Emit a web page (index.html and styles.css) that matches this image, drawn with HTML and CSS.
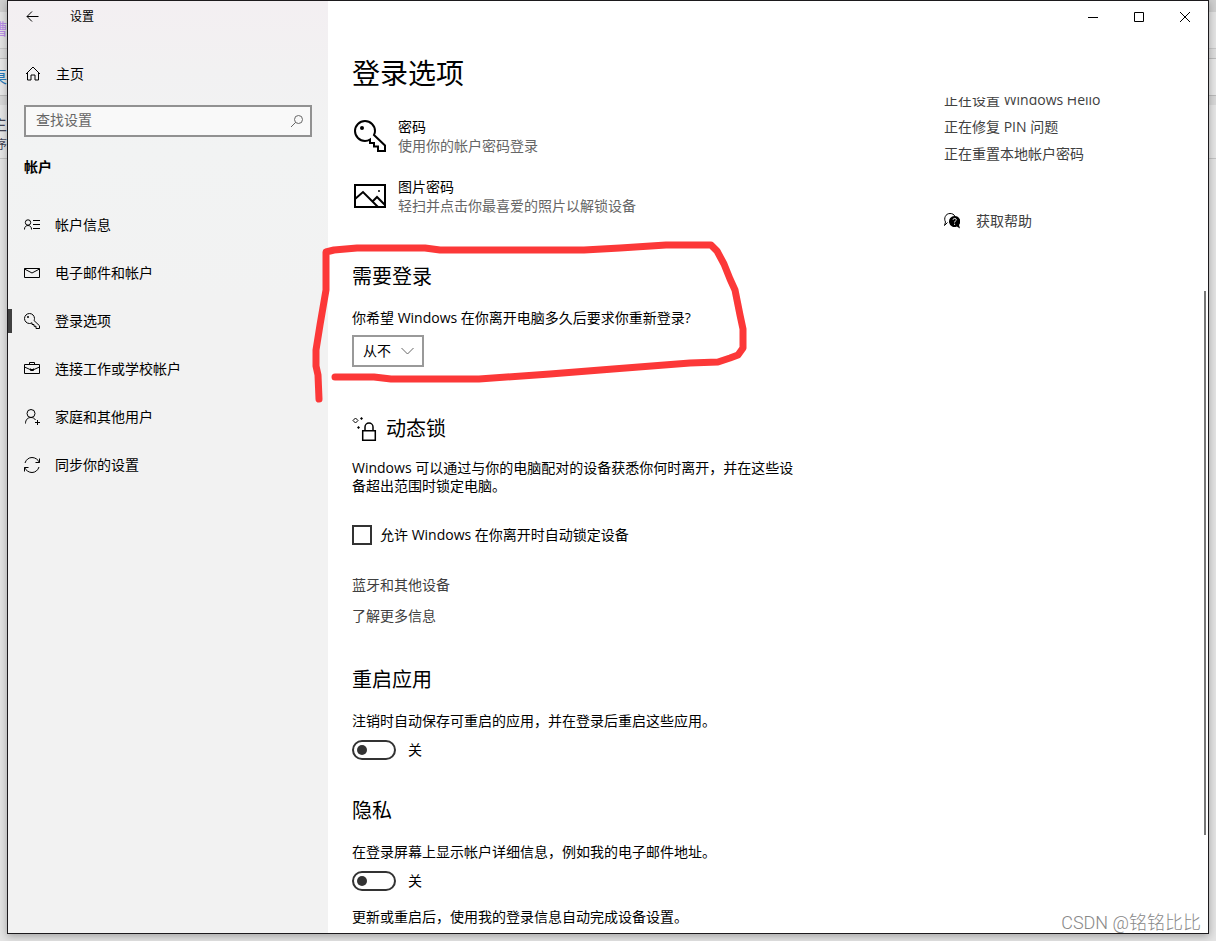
FILE: index.html
```html
<!DOCTYPE html>
<html lang="zh-CN">
<head>
<meta charset="utf-8">
<meta name="viewport" content="width=device-width, initial-scale=1">
<title>设置</title>
<link rel="stylesheet" href="styles.css">
</head>
<body>
<div class="backdrop" aria-hidden="true">
  <span class="behind behind-purple">槽</span>
  <span class="behind behind-blue">桌</span>
  <span class="behind behind-dark">主</span>
  <span class="behind behind-word">序</span>
</div>
<div class="window">
  <aside class="sidebar">
    <header class="titlebar">
      <button class="back" type="button" aria-label="返回">
        <svg width="14" height="12" viewBox="0 0 14 12"><path d="M13.500 5.500H2M7 .5l-5 5 5 5"/></svg>
      </button>
      <span class="app-name">设置</span>
    </header>
    <a class="home" href="#">
      <svg width="16" height="16" viewBox="0 0 16 16"><path d="M1 8L8 1l7 7M2.500 6.500v7.500h3.500V9h4v5h3.500V6.500"/></svg>
      <span>主页</span>
    </a>
    <form class="search">
      <input type="text" placeholder="查找设置" aria-label="查找设置">
      <svg width="14" height="14" viewBox="0 0 14 14"><circle cx="8.500" cy="5.500" r="4"/><path d="M5.700 8.300L1 13"/></svg>
    </form>
    <h2 class="group">帐户</h2>
    <nav class="nav">
      <a class="nav-item" href="#">
        <svg width="16" height="16" viewBox="0 0 16 16"><circle cx="4" cy="5.500" r="2.700"/><path d="M.5 12.500V12c0-2 1.500-3.500 3.500-3.500S7.500 10 7.500 12v.5M9 3.500h7M9 7.500h7M9 11.500h7"/></svg>
        <span>帐户信息</span>
      </a>
      <a class="nav-item" href="#">
        <svg width="16" height="16" viewBox="0 0 16 16"><path d="M.5 3.500h15v9H.5zM.5 4L8 8 15.500 4"/></svg>
        <span>电子邮件和帐户</span>
      </a>
      <a class="nav-item current" href="#" aria-current="page">
        <svg width="16" height="16" viewBox="0 0 32 32"><path class="double" d="M11 1C5.500 1 1 5.500 1 11s4.500 10 10 10c2 0 3.500-.5 5-1.500V23h4v3.500h4V31h7v-5.500L20 15c.7-1.300 1-2.500 1-4 0-5.500-4.500-10-10-10z"/><circle class="dot" cx="8" cy="8" r="2"/></svg>
        <span>登录选项</span>
      </a>
      <a class="nav-item" href="#">
        <svg width="16" height="16" viewBox="0 0 16 16"><path d="M.5 3.500h15v9H.5zM5.500 3.500v-2h5v2M.5 6L6 8.500h4L15.500 6M6.500 7.500v2h3v-2"/></svg>
        <span>连接工作或学校帐户</span>
      </a>
      <a class="nav-item" href="#">
        <svg width="16" height="16" viewBox="0 0 16 16"><circle cx="7" cy="4.500" r="4"/><path d="M1.500 14.500c0-3.500 2-6 5.500-6 2 0 3.500.8 4.500 2.500M13.500 11v5M11 13.500h5"/></svg>
        <span>家庭和其他用户</span>
      </a>
      <a class="nav-item" href="#">
        <svg width="16" height="16" viewBox="0 0 16 16"><path d="M1 6c1-3.300 3.800-5.500 7-5.500S14 2.500 15.500 5.500M15.500 1.500v4h-4M15 10c-1 3.300-3.800 5.500-7 5.500S2 13.500.5 10.500M.5 14.500v-4h4"/></svg>
        <span>同步你的设置</span>
      </a>
    </nav>
  </aside>

  <main class="main">
    <div class="captions">
      <button type="button" aria-label="最小化"><svg width="11" height="11" viewBox="0 0 11 11"><path d="M0 5.500h10"/></svg></button>
      <button type="button" aria-label="最大化"><svg width="11" height="11" viewBox="0 0 11 11"><path d="M.5.5h9v9H.5z"/></svg></button>
      <button type="button" aria-label="关闭"><svg width="11" height="11" viewBox="0 0 11 11"><path d="M0 0l10 10M10 0L0 10"/></svg></button>
    </div>
    <h1>登录选项</h1>
    <div class="scroll">
      <div class="content">
        <ul class="options">
          <li>
            <svg width="32" height="32" viewBox="0 0 32 32"><path class="double" d="M11 1C5.500 1 1 5.500 1 11s4.500 10 10 10c2 0 3.500-.5 5-1.500V23h4v3.500h4V31h7v-5.500L20 15c.7-1.300 1-2.500 1-4 0-5.500-4.500-10-10-10z"/><circle class="dot" cx="8" cy="8" r="2"/></svg>
            <div><strong>密码</strong><p>使用你的帐户密码登录</p></div>
          </li>
          <li>
            <svg width="32" height="32" viewBox="0 0 32 32"><path class="double" d="M1 5h30v22H1zM1 19l8-7 15 15M19 21l4-4 8 8"/><circle class="dot" cx="25" cy="11" r="1"/></svg>
            <div><strong>图片密码</strong><p>轻扫并点击你最喜爱的照片以解锁设备</p></div>
          </li>
        </ul>

        <section class="block signin">
          <h2>需要登录</h2>
          <label for="away">你希望 Windows 在你离开电脑多久后要求你重新登录?</label>
          <div class="select">
            <select id="away"><option>从不</option></select>
            <svg width="13" height="8" viewBox="0 0 13 8"><path d="M.5 1l6 6 6-6"/></svg>
          </div>
        </section>

        <section class="block lock">
          <h2>
            <svg width="26" height="26" viewBox="0 0 26 26"><path class="spark" d="M3.500 2L6 4.500 3.500 7 1 4.500z"/><path class="dot" d="M9.500 1l1.500 1.500L9.500 4 8 2.500zM6.500 10L8 11.500 6.500 13 5 11.500z"/><path class="lock-body" d="M10.700 14.700h12.600v9.600H10.700zM13 14.500V11a4 4 0 0 1 8 0v3.500"/></svg>
            动态锁
          </h2>
          <p>Windows 可以通过与你的电脑配对的设备获悉你何时离开，并在这些设备超出范围时锁定电脑。</p>
          <label class="check"><input type="checkbox">允许 Windows 在你离开时自动锁定设备</label>
          <div class="links">
            <a href="#">蓝牙和其他设备</a>
            <a href="#">了解更多信息</a>
          </div>
        </section>

        <section class="block restart">
          <h2>重启应用</h2>
          <p id="restart-text">注销时自动保存可重启的应用，并在登录后重启这些应用。</p>
          <label class="toggle"><input type="checkbox" role="switch" aria-describedby="restart-text">关</label>
        </section>

        <section class="block privacy">
          <h2>隐私</h2>
          <p id="privacy-text">在登录屏幕上显示帐户详细信息，例如我的电子邮件地址。</p>
          <label class="toggle"><input type="checkbox" role="switch" aria-describedby="privacy-text">关</label>
          <p>更新或重启后，使用我的登录信息自动完成设备设置。</p>
        </section>
      </div>

      <div class="related">
        <a href="#">正在设置 Windows Hello</a>
        <a href="#">正在修复 PIN 问题</a>
        <a href="#">正在重置本地帐户密码</a>
        <a class="help" href="#">
          <svg width="16" height="16" viewBox="0 0 16 16"><path d="M3.500 9.500L.5 12.500l1-3.500C-.5 5.500 1.500.5 6 .5c2.500 0 4 1 4.700 2.500"/><path class="dot" d="M10.500 3a5.500 5.500 0 1 0 2.300 10.500L16 15.500 15 12A5.500 5.500 0 0 0 10.500 3z"/><path class="mark" d="M9 6.800c0-1.900 3.300-1.900 3.300 0 0 1.200-1.700 1.200-1.700 2.700M10.600 10.700v1.200"/></svg>
          获取帮助
        </a>
      </div>
    </div>
    <div class="scrollbar"></div>
  </main>
</div>

<svg class="annotation" width="760" height="420" viewBox="0 0 760 420" aria-hidden="true">
  <path d="M319 399L318 375 316 366V350L320 325 326 290V252L334 250 357 248H425L440 250H584L620 248 666 245H711L717 251 724 264 730 279 735 290 740 315 743 329V348L738 355 730 358 718 362 690 363 613 369 550 374 479 379H391L374 377H335"/>
</svg>
<div class="watermark">CSDN @铭铭比比</div>
</body>
</html>
```

FILE: styles.css
```css
* {
  box-sizing: border-box;
}

html,
body {
  height: 100%;
  margin: 0;
}

body {
  display: flex;
  position: relative;
  overflow: hidden;
  padding: 0 7px 7px;
  background: #dedede;
  color: #000;
  font: 14px/18px "Open Sans", "Noto Sans CJK SC", sans-serif;
}

h1,
h2,
p,
ul {
  margin: 0;
  padding: 0;
  font-weight: 400;
}

a {
  color: inherit;
  text-decoration: none;
}

button {
  display: flex;
  align-items: center;
  justify-content: center;
  padding: 0;
  border: 0;
  background: none;
}

svg {
  flex: none;
  fill: none;
  stroke: #000;
}

.double {
  stroke-width: 2;
}

.dot {
  fill: #000;
  stroke: none;
}

/* Windows behind the settings window */
.backdrop {
  position: absolute;
  inset: 0;
  overflow: hidden;
  background: linear-gradient(#cfcfcf 0 12px, #e4e4e4 12px 48px, #c8c8c8 48px 49px, #dedede 49px 58px, #bcbcbc 58px 59px, #e8e8e8 59px 95px, #bbb 95px 96px, #d8d8d8 96px 105px, #e6e6e6 105px 158px, #c4c4c4 158px 159px, #e4e4e4 159px);
}

.behind {
  position: absolute;
  right: calc(100% - 7px);
  font-size: 16px;
}

.behind-purple {
  top: 20px;
  color: #b98be8;
}

.behind-blue {
  top: 68px;
  color: #2779b8;
}

.behind-dark {
  top: 115px;
  color: #445;
}

.behind-word {
  top: 136px;
  font-size: 12px;
  color: #445;
}

.window {
  display: grid;
  position: relative;
  flex: 1;
  grid-template-columns: 320px minmax(0, 1fr);
  overflow: hidden;
  border: 1px solid #1c1a1d;
  background: #fff;
  box-shadow: 0 2px 8px rgba(0, 0, 0, 0.3);
}

.sidebar {
  background: linear-gradient(#f3eff2, #f2f1f2 70px, #f2f3f3 150px, #f2f2f2 300px);
}

.titlebar {
  display: flex;
  align-items: center;
  height: 32px;
}

.back {
  width: 48px;
  height: 32px;
}

.app-name {
  margin-left: 14px;
  font-size: 12px;
}

.home {
  display: flex;
  align-items: center;
  gap: 15px;
  height: 40px;
  margin-top: 21px;
  padding-left: 17px;
}

.search {
  display: flex;
  align-items: center;
  height: 32px;
  margin: 11px 16px 0;
  padding-right: 6px;
  border: 2px solid #919191;
  background: #f9f9f9;
}

.search input {
  flex: 1;
  min-width: 0;
  padding: 0 10px 2px;
  border: 0;
  outline: 0;
  background: none;
  font: inherit;
}

.search input::placeholder {
  color: #666;
}

.search svg {
  stroke: #666;
}

.group {
  margin: 20px 16px 0;
  font-size: 14px;
  font-weight: 700;
  line-height: 20px;
}

.nav {
  margin-top: 24px;
}

.nav-item {
  display: flex;
  align-items: center;
  gap: 15px;
  height: 48px;
  padding-left: 16px;
}

.current {
  background: linear-gradient(#404040, #404040) left center / 4px 24px no-repeat;
}

.main {
  display: flex;
  position: relative;
  flex-direction: column;
  min-height: 0;
}

.captions {
  display: flex;
  justify-content: flex-end;
}

.captions button {
  width: 46px;
  height: 32px;
}

h1 {
  margin: 22px 24px 6px;
  font-size: 28px;
  line-height: 36px;
}

.scroll {
  display: grid;
  flex: 1;
  grid-template-columns: minmax(0, 592px) minmax(0, 1fr);
  min-height: 0;
  padding-left: 24px;
  overflow: hidden;
}

.options {
  display: grid;
  gap: 22px;
  padding-top: 20px;
  list-style: none;
}

.options li {
  display: flex;
  align-items: center;
  gap: 12px;
  padding-left: 2px;
  line-height: 19px;
}

.options strong {
  font-weight: 400;
}

.options p {
  color: #666;
}

.block {
  max-width: 448px;
}

.block h2 {
  display: flex;
  align-items: center;
  gap: 8px;
  margin-bottom: 18px;
  font-size: 20px;
  line-height: 28px;
}

.signin,
.lock {
  margin-top: 48px;
}

.lock h2 {
  margin-bottom: 16px;
}

.lock-body {
  stroke-width: 1.5;
}

.restart {
  margin-top: 41px;
}

.privacy {
  margin-top: 37px;
}

.signin label {
  display: block;
}

.select {
  display: inline-flex;
  position: relative;
  margin-top: 8px;
  vertical-align: top;
}

.select select {
  width: 72px;
  height: 32px;
  padding: 0 9px;
  border: 2px solid #999;
  border-radius: 0;
  appearance: none;
  background: #fff;
  color: #000;
  font: inherit;
}

.select svg {
  position: absolute;
  top: 12px;
  right: 10px;
  stroke: #666;
  pointer-events: none;
}

.check {
  display: flex;
  align-items: center;
  gap: 8px;
  margin-top: 30px;
}

.check input {
  width: 20px;
  height: 20px;
  margin: 0;
  border: 2px solid #333;
  appearance: none;
}

.links {
  display: grid;
  gap: 13px;
  justify-items: start;
  margin-top: 31px;
  color: #404040;
}

.toggle {
  display: flex;
  align-items: center;
  gap: 12px;
  width: max-content;
  margin: 10px 0 17px;
}

.toggle input {
  display: flex;
  align-items: center;
  width: 44px;
  height: 20px;
  margin: 0;
  padding-left: 3px;
  border: 2px solid #333;
  border-radius: 10px;
  appearance: none;
}

.toggle input::before {
  width: 10px;
  height: 10px;
  border-radius: 50%;
  background: #333;
  content: "";
}

.restart .toggle {
  margin-bottom: 0;
}

.related {
  display: flex;
  flex-direction: column;
  gap: 9px;
  align-items: flex-start;
  margin-top: -6px;
  color: #404040;
}

.help {
  display: flex;
  align-items: center;
  gap: 16px;
  margin-top: 40px;
}

.mark {
  stroke: #fff;
}

.scrollbar {
  position: absolute;
  top: 290px;
  right: 2px;
  bottom: 98px;
  width: 2px;
  background: #777;
}

.annotation {
  position: absolute;
  top: 0;
  left: 0;
  stroke: #fc3838;
  stroke-width: 7;
  stroke-linecap: round;
  stroke-linejoin: round;
  pointer-events: none;
}

.watermark {
  position: absolute;
  right: 15px;
  bottom: 6px;
  color: #888;
  font: 300 18px/24px Roboto, "Noto Sans CJK SC", sans-serif;
}
```
